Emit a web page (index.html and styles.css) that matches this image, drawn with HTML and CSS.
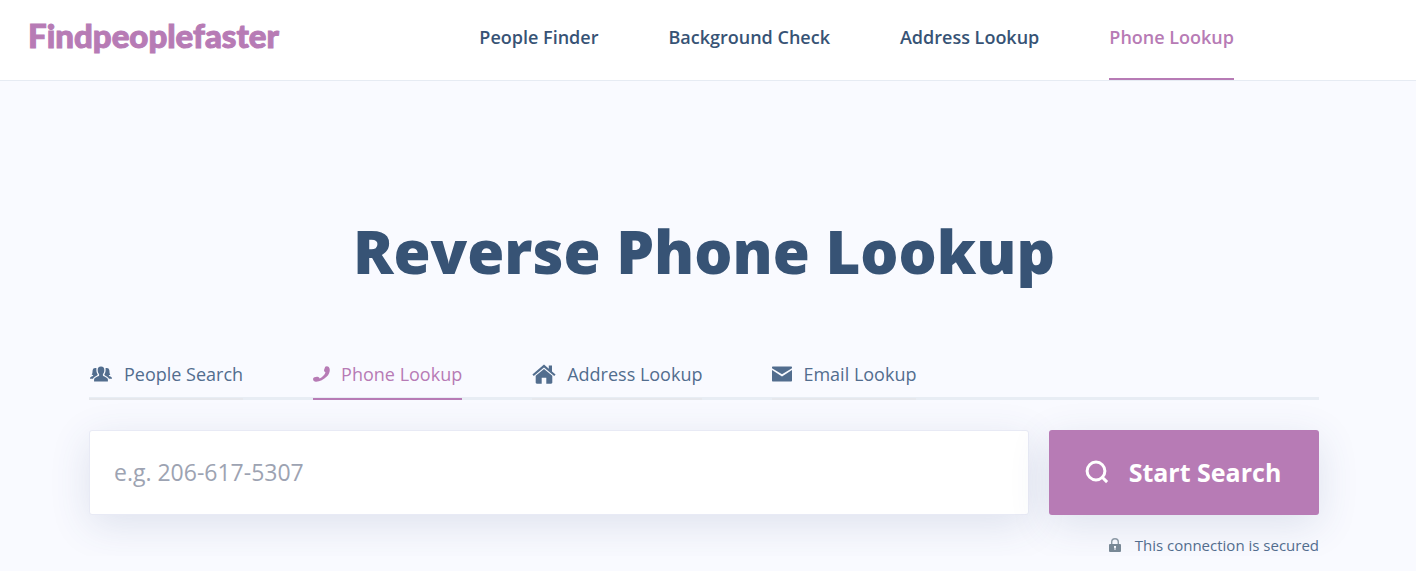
FILE: index.html
```html
<!DOCTYPE html>
<html lang="en">
<head>
    <meta charset="UTF-8">
    <meta name="viewport" content="width=device-width, initial-scale=1">
    <title>Reverse Phone Lookup</title>
    <link rel="stylesheet" href="styles.css">
</head>
<body>
<header class="header">
    <a class="logo" href="#">Findpeoplefaster</a>
    <nav class="menu">
        <a href="#">People Finder</a>
        <a href="#">Background Check</a>
        <a href="#">Address Lookup</a>
        <a class="active" href="#">Phone Lookup</a>
    </nav>
</header>

<main class="container">
    <h1 class="title">Reverse Phone Lookup</h1>

    <nav class="tabs">
        <a href="#">
            <svg width="24" height="20" viewBox="0 0 24 20" fill="currentColor">
                <path d="M12 2.500c2.400 0 3.500 1.500 3.300 3.900-.1 1.700-.7 2.800-1.400 3.600v1.600c.5 1.200 4.500 1.400 5 3.900.1.700 0 1.900 0 1.900H5.100s-.1-1.200 0-1.900c.5-2.500 4.500-2.700 5-3.900V10c-.7-.8-1.300-1.900-1.400-3.600C8.500 4 9.600 2.500 12 2.500z"/>
                <path d="M6.200 4c.6 0 1 .1 1.300.3-.4 2 0 4.500 1.200 6.300 0 1.200-3.400 1.800-4.700 4.100H1c0-2.400 2.900-1.900 3.200-3.100 0-.5-1-.4-1.500-.8.900-1.300.7-2.600.9-4.200C3.900 4.800 4.800 4 6.200 4z"/>
                <path d="M17.800 4c-.6 0-1 .1-1.300.3.4 2 0 4.500-1.200 6.300 0 1.200 3.400 1.800 4.700 4.100h3c0-2.400-2.900-1.900-3.200-3.100 0-.5 1-.4 1.500-.8-.9-1.300-.7-2.600-.9-4.200-.3-1.800-1.200-2.600-2.600-2.600z"/>
            </svg>
            <span>People Search</span>
        </a>
        <a class="active" href="#">
            <svg width="17" height="20" viewBox="0 0 17 20" fill="currentColor">
                <path d="M12.200 2.800c.8-.9 2.600-.8 3.600.1 2 2.400.8 6.700-2 9.700-3 3.200-7.500 5.400-11 5.200-1.500-.1-2.500-1-2.700-2.300-.2-1.200.3-2 1.400-2.300l2.400-.5c1-.2 1.700.1 2.200.9l.5.800c2.500-1.100 4.800-3.200 5.900-5.900l-.8-.7c-.7-.6-.8-1.300-.5-2.200z"/>
            </svg>
            <span>Phone Lookup</span>
        </a>
        <a href="#">
            <svg width="24" height="20" viewBox="0 0 24 20" fill="currentColor">
                <path d="M12 .6.400 10.500l1.400 1.500L12 3.400 22.200 12l1.400-1.500-3.600-3V1.400h-3.200v3.300z"/>
                <path d="M12 4.900 3.700 11.700v6.900c0 .7.500 1.200 1.200 1.200h4.800v-6h4.600v6h4.800c.7 0 1.200-.5 1.200-1.200v-6.900z"/>
            </svg>
            <span>Address Lookup</span>
        </a>
        <a href="#">
            <svg width="20" height="20" viewBox="0 0 20 20" fill="currentColor">
                <path d="M1 2.500h18c.6 0 1 .4 1 1v.8l-10 6-10-6v-.8c0-.6.400-1 1-1z"/>
                <path d="M0 6.100 10 12.500l10-6.400v10.400c0 .6-.4 1-1 1H1c-.6 0-1-.4-1-1z"/>
            </svg>
            <span>Email Lookup</span>
        </a>
    </nav>

    <form class="search">
        <input class="search-input" type="tel" placeholder="e.g. 206-617-5307" aria-label="Phone number">
        <button class="search-button" type="submit">
            <svg width="24" height="24" viewBox="0 0 24 24" fill="none" stroke="currentColor" stroke-width="3">
                <circle cx="11" cy="11" r="8.900"/>
                <path d="m16.500 16.500 5.600 5.600"/>
            </svg>
            <span>Start Search</span>
        </button>
    </form>

    <p class="secured">
        <svg width="12" height="14" viewBox="0 0 12 14">
            <path d="M2.700 6V4a3.300 3.300 0 0 1 6.600 0v2" fill="none" stroke="#8b98a5" stroke-width="1.400"/>
            <rect y="6" width="12" height="8" rx="1" fill="#788896"/>
            <path d="M5 8h2v1.600l-.5.600V12h-1v-1.800L5 9.600z" fill="#f9faff"/>
        </svg>
        <span>This connection is secured</span>
    </p>
</main>
</body>
</html>
```
FILE: styles.css
```css
:root {
    --primary: #b77bb5;
    --dark: #375375;
    --muted: #526d8e;
    --line: #e8edf4;
}

* {
    box-sizing: border-box;
}

body {
    margin: 0;
    background: #f9faff;
    color: var(--dark);
    font-family: "Open Sans", sans-serif;
}

a {
    color: inherit;
    text-decoration: none;
}

/* header */
.header {
    display: flex;
    align-items: stretch;
    justify-content: space-between;
    height: 81px;
    padding: 0 182px 0 28px;
    background: #fff;
    border-bottom: 1px solid #e6ebf3;
}

.logo {
    padding-top: 15px;
    color: var(--primary);
    font-family: Lato, sans-serif;
    font-size: 33px;
    font-weight: 900;
    line-height: 40px;
    -webkit-text-stroke: 1px var(--primary);
}

.menu {
    display: flex;
    gap: 70px;
    font-size: 18px;
    font-weight: 600;
    line-height: 24px;
}

.menu a {
    padding-top: 25px;
    border-bottom: 2px solid transparent;
}

.menu .active {
    color: var(--primary);
    border-color: var(--primary);
}

/* content */
.container {
    max-width: 1238px;
    margin: 0 auto;
    padding-right: 8px;
}

.title {
    margin: 130px 0 0;
    font-size: 60px;
    font-weight: 800;
    line-height: 80px;
    text-align: center;
}

.tabs {
    display: flex;
    gap: 70px;
    margin-top: 70px;
    color: var(--muted);
    font-size: 18px;
    font-weight: 500;
    line-height: 26px;
    box-shadow: inset 0 -3px var(--line);
}

.tabs a {
    display: flex;
    align-items: center;
    gap: 11px;
    padding-bottom: 11px;
    border-bottom: 2px solid #e6e8ed;
}

.tabs .active {
    color: var(--primary);
    border-color: var(--primary);
}

/* search form */
.search {
    display: flex;
    gap: 20px;
    margin-top: 30px;
}

.search-input,
.search-button {
    height: 85px;
    border-radius: 3px;
    box-shadow: 0 10px 40px rgba(55, 75, 125, 0.14);
    font-family: inherit;
}

.search-input {
    flex: 1;
    min-width: 0;
    padding: 0 24px 2px;
    border: 1px solid #e8eaf5;
    background: #fff;
    color: var(--dark);
    font-size: 23px;
}

.search-input::placeholder {
    color: #9da3b2;
}

.search-button {
    display: flex;
    align-items: center;
    justify-content: center;
    gap: 20px;
    width: 270px;
    padding: 0 8px 2px 6px;
    border: 0;
    background: var(--primary);
    color: #fff;
    font-size: 25px;
    font-weight: 700;
}

.secured {
    display: flex;
    align-items: center;
    justify-content: flex-end;
    gap: 14px;
    margin: 19px 0 0;
    color: var(--muted);
    font-size: 15px;
    line-height: 22px;
}
```
